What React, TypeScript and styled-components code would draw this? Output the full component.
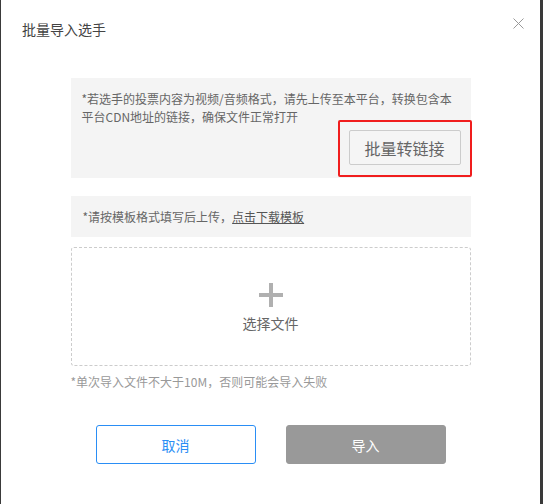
import * as React from "react";
import styled, { createGlobalStyle } from "styled-components";

const GlobalStyle = createGlobalStyle`
  html, body {
    margin: 0;
    padding: 0;
    background: #3a3a3a;
  }
  body {
    font-family: "Microsoft YaHei", "Noto Sans CJK SC", "Noto Sans", sans-serif;
  }
`;

export default function App() {
  return (
    <React.Fragment>
      <GlobalStyle />
      <Page>
        <Modal>
          <Header>
            <Title>批量导入选手</Title>
            <CloseButton aria-label="close">
              <svg width="11" height="11" viewBox="0 0 11 11">
                <path d="M0.5 0.5 L10.5 10.5 M10.5 0.5 L0.5 10.5" stroke="#999" strokeWidth="1" fill="none" />
              </svg>
            </CloseButton>
          </Header>

          <Body>
            <TipBox>
              <TipText>
                *若选手的投票内容为视频/音频格式，请先上传至本平台，转换包含本平台CDN地址的链接，确保文件正常打开
              </TipText>
              <ConvertRow>
                <ConvertButton>批量转链接</ConvertButton>
              </ConvertRow>
            </TipBox>

            <TemplateBox>
              *请按模板格式填写后上传，<TemplateLink>点击下载模板</TemplateLink>
            </TemplateBox>

            <DropZone>
              <PlusIcon />
              <DropLabel>选择文件</DropLabel>
            </DropZone>

            <Note>*单次导入文件不大于10M，否则可能会导入失败</Note>
          </Body>

          <Footer>
            <FooterButton variant="ghost">取消</FooterButton>
            <FooterButton variant="disabled">导入</FooterButton>
          </Footer>
        </Modal>
      </Page>
    </React.Fragment>
  );
}

const Page = styled.div`
  width: 543px;
  height: 504px;
  display: flex;
`;

const Modal = styled.div`
  margin-left: 1px;
  width: 539px;
  height: 504px;
  background: #fff;
  display: flex;
  flex-direction: column;
`;

const Header = styled.div`
  height: 58px;
  padding: 0 16px 0 21px;
  display: flex;
  align-items: flex-start;
  justify-content: space-between;
`;

const Title = styled.div`
  margin-top: 20px;
  font-size: 14px;
  line-height: 18px;
  color: #444;
`;

const CloseButton = styled.div`
  margin-top: 18px;
  width: 11px;
  height: 11px;
  display: flex;
  cursor: pointer;
`;

const Body = styled.div`
  width: 400px;
  margin: 20px auto 0;
  display: flex;
  flex-direction: column;
`;

const TipBox = styled.div`
  background: #f4f4f4;
  height: 100px;
  box-sizing: border-box;
  padding: 12px 10px 0 11px;
  display: flex;
  flex-direction: column;
`;

const TipText = styled.div`
  font-size: 12px;
  line-height: 18px;
  color: #666;
  padding-right: 1px;
`;

const ConvertRow = styled.div`
  margin-top: 4px;
  display: flex;
  justify-content: flex-end;
`;

/* red highlight frame drawn over the button (screenshot annotation) */
const ConvertButton = styled.div`
  position: relative;
  width: 112px;
  height: 35px;
  box-sizing: border-box;
  border: 1px solid #ccc;
  border-radius: 2px;
  background: #f5f5f5;
  color: #666;
  font-size: 16px;
  display: flex;
  align-items: center;
  justify-content: center;

  &::after {
    content: "";
    position: absolute;
    left: -12px;
    top: -11px;
    right: -12px;
    bottom: -13px;
    border: 2px solid #f01d1d;
    border-radius: 2px;
    pointer-events: none;
  }
`;

const TemplateBox = styled.div`
  margin-top: 18px;
  height: 41px;
  background: #f4f4f4;
  box-sizing: border-box;
  padding: 0 12px;
  display: flex;
  align-items: center;
  font-size: 12px;
  color: #666;
`;

const TemplateLink = styled.span`
  color: #555;
  text-decoration: underline;
  cursor: pointer;
`;

const DropZone = styled.div`
  margin-top: 10px;
  height: 119px;
  box-sizing: border-box;
  border: 1px dashed #ccc;
  border-radius: 3px;
  display: flex;
  flex-direction: column;
  align-items: center;
  padding-top: 35px;
`;

const PlusIcon = styled.div`
  position: relative;
  width: 24px;
  height: 24px;
  &::before,
  &::after {
    content: "";
    position: absolute;
    background: #b0b0b0;
  }
  &::before {
    left: 0;
    top: 10px;
    width: 24px;
    height: 4px;
  }
  &::after {
    left: 10px;
    top: 0;
    width: 4px;
    height: 24px;
  }
`;

const DropLabel = styled.div`
  margin-top: 7px;
  font-size: 14px;
  line-height: 18px;
  color: #666;
`;

const Note = styled.div`
  margin-top: 7px;
  font-size: 12px;
  line-height: 18px;
  color: #999;
`;

const Footer = styled.div`
  margin-top: 34px;
  display: flex;
  justify-content: center;
  gap: 30px;
`;

const FooterButton = styled.div<{ variant: "ghost" | "disabled" }>`
  width: 160px;
  height: 39px;
  box-sizing: border-box;
  border-radius: 3px;
  font-size: 14px;
  display: flex;
  align-items: center;
  justify-content: center;
  cursor: pointer;
  border: 1px solid ${p => (p.variant === "ghost" ? "#2a8ef5" : "#999")};
  background: ${p => (p.variant === "ghost" ? "#fff" : "#999")};
  color: ${p => (p.variant === "ghost" ? "#2a8ef5" : "#fff")};
`;
